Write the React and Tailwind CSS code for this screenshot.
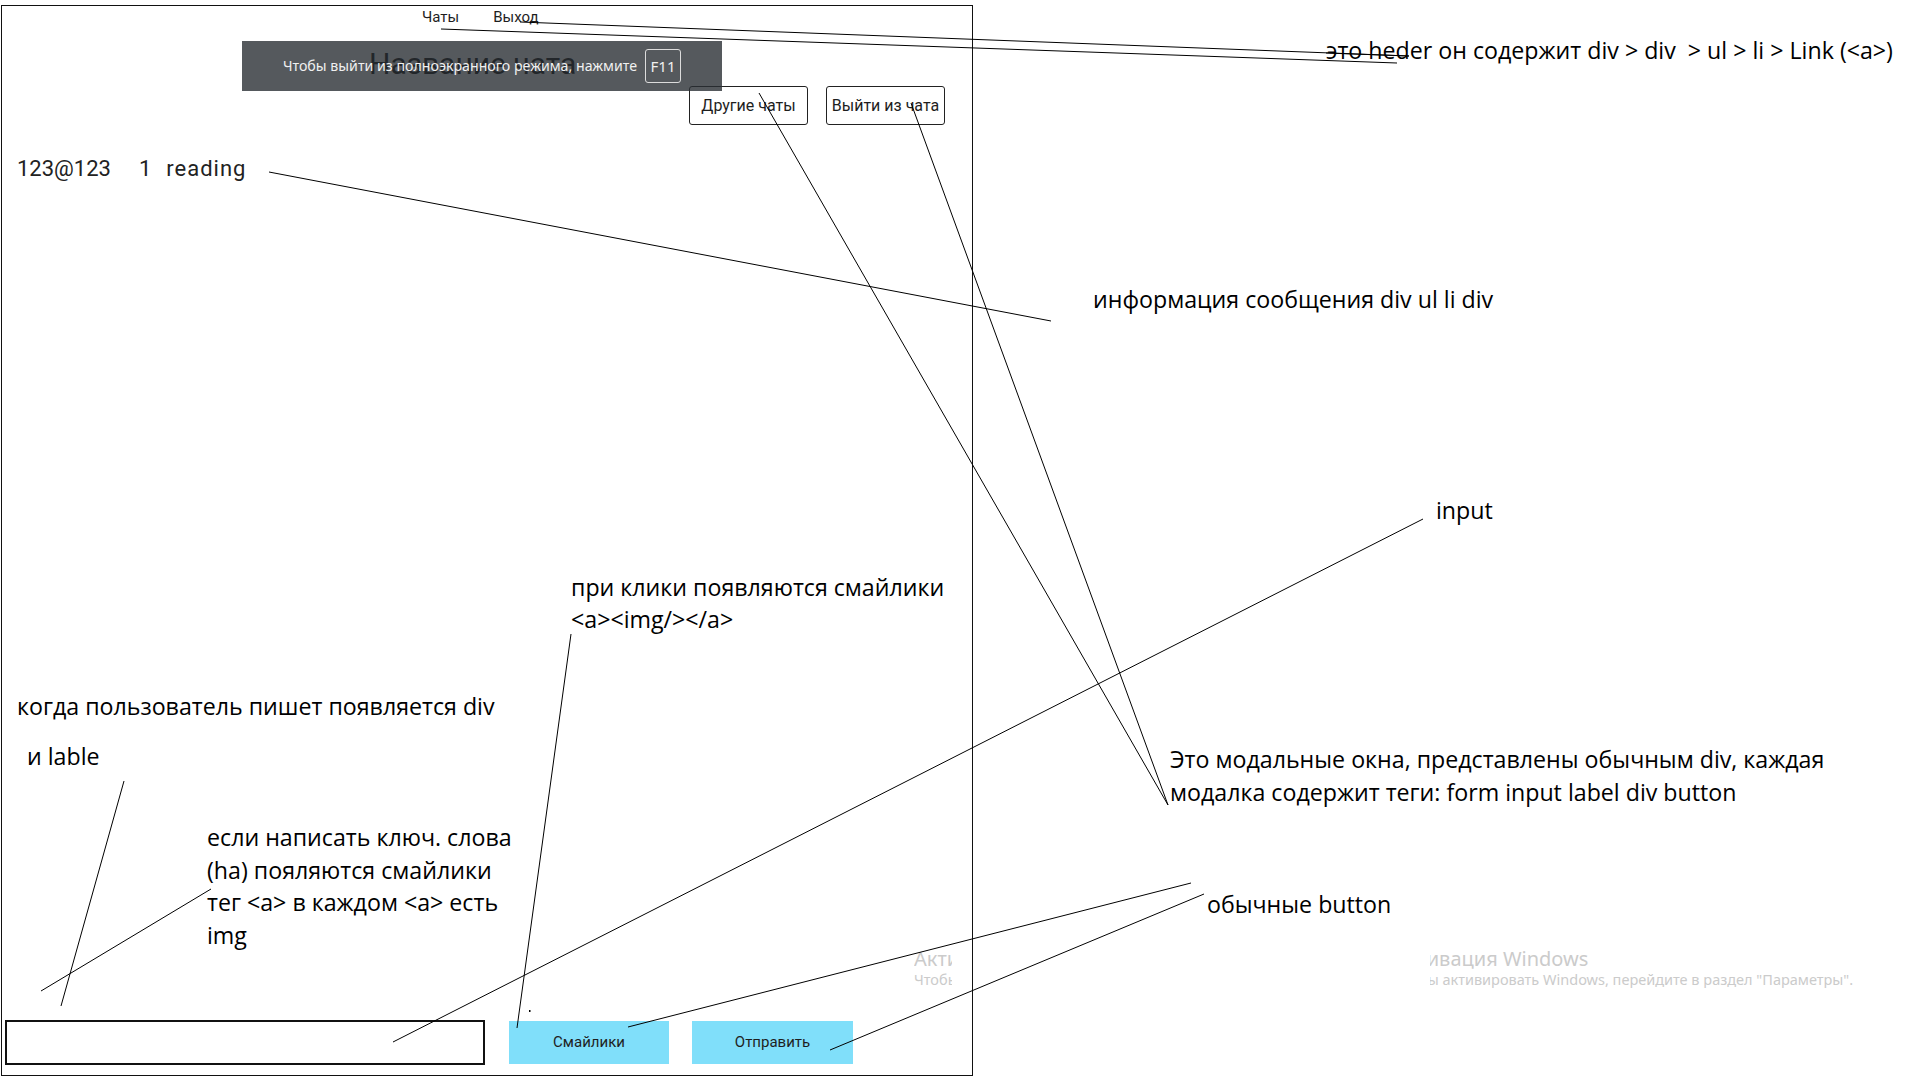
export default function App() {
  const lines = [
    [441, 29, 1397, 63],
    [520, 22, 1409, 56],
    [269, 172, 1051, 321],
    [759, 93, 1168, 805],
    [911, 103, 1168, 805],
    [1423, 519, 393, 1042],
    [571, 634, 517, 1028],
    [1191, 883, 628, 1027],
    [1204, 894, 830, 1050],
    [124, 781, 61, 1006],
    [211, 889, 41, 991],
  ];
  return (
    <div className="relative w-[1920px] h-[1080px] bg-white overflow-hidden">
      <div className="pt-[5px] pl-[1px]">
        <div className="w-[972px] h-[1071px] border border-[#111] flex flex-col font-['Roboto',sans-serif] text-[#1e1e1e]">
          <ul className="flex pl-[420px] gap-[34px] text-[15px] leading-[18px] mt-[2px]">
            <li><a>Чаты</a></li>
            <li><a>Выход</a></li>
          </ul>
          <div className="pl-[367px] mt-[20px] text-[30px] leading-[36px] text-black">Название чата</div>
          <div className="flex justify-end gap-[18px] pr-[27px] mt-[4px]">
            <button className="w-[119px] h-[39px] border border-[#222] rounded-[3px] bg-white text-[16px] text-[#1e1e1e]">Другие чаты</button>
            <button className="w-[119px] h-[39px] border border-[#222] rounded-[3px] bg-white text-[16px] text-[#1e1e1e]">Выйти из чата</button>
          </div>
          <ul className="mt-[31px] pl-[15px] text-[22px] leading-[26px] text-[#222]">
            <li className="flex">
              <div>123@123</div>
              <div className="ml-[28px]">1</div>
              <div className="ml-[15px] tracking-[1px]">reading</div>
            </li>
          </ul>
          <div className="mt-auto mb-[10px] pl-[3px] flex items-start">
            <input className="w-[480px] h-[45px] border-2 border-[#111] outline-none" />
            <button className="ml-[24px] mt-[1px] w-[160px] h-[43px] bg-[#80dffa] text-[15px] text-[#1e1e1e]">Смайлики</button>
            <button className="ml-[23px] mt-[1px] w-[161px] h-[43px] bg-[#80dffa] text-[15px] text-[#1e1e1e]">Отправить</button>
          </div>
        </div>
      </div>

      {/* fullscreen toast */}
      <div className="absolute left-[242px] top-[41px] w-[480px] h-[50px] bg-[rgba(43,47,52,0.8)] flex items-center justify-center gap-[8px] font-['Noto_Sans',sans-serif] text-[#f0f0f0]">
        <span className="text-[14.2px]">Чтобы выйти из полноэкранного режима, нажмите</span>
        <span className="w-[36px] h-[34px] border border-[#dcdcdc] rounded-[3px] flex items-center justify-center text-[15px]">F11</span>
      </div>

      {/* windows watermark pieces */}
      <div className="absolute left-[914px] top-[948px] w-[38px] overflow-hidden font-['Noto_Sans',sans-serif] text-[#cbcbcb] whitespace-nowrap">
        <div className="text-[20px] leading-[22px]">Активация Windows</div>
        <div className="text-[14.5px] leading-[18px]">Чтобы активировать Windows, перейдите в раздел "Параметры".</div>
      </div>
      <div className="absolute left-[1430px] top-[948px] w-[480px] overflow-hidden font-['Noto_Sans',sans-serif] text-[#cbcbcb] whitespace-nowrap">
        <div className="ml-[-36px]">
          <div className="text-[20px] leading-[22px]">Активация Windows</div>
          <div className="text-[14.5px] leading-[18px]">Чтобы активировать Windows, перейдите в раздел "Параметры".</div>
        </div>
      </div>

      {/* annotations */}
      <div className="font-['Open_Sans',sans-serif] text-[23.2px] leading-[33px] text-black">
        <div className="absolute left-[1326px] top-[34px] whitespace-pre">это heder он содержит div &gt; div  &gt; ul &gt; li &gt; Link (&lt;a&gt;)</div>
        <div className="absolute left-[1093px] top-[283px] whitespace-nowrap">информация сообщения div ul li div</div>
        <div className="absolute left-[1436px] top-[494px]">input</div>
        <div className="absolute left-[1170px] top-[743px] whitespace-nowrap">
          <div>Это модальные окна, представлены обычным div, каждая</div>
          <div>модалка содержит теги: form input label div button</div>
        </div>
        <div className="absolute left-[1207px] top-[888px] whitespace-nowrap">обычные button</div>
        <div className="absolute left-[571px] top-[571px] leading-[32px] whitespace-nowrap">
          <div>при клики появляются смайлики</div>
          <div>&lt;a&gt;&lt;img/&gt;&lt;/a&gt;</div>
        </div>
        <div className="absolute left-[17px] top-[690px] whitespace-nowrap">когда пользователь пишет появляется div</div>
        <div className="absolute left-[27px] top-[740px] whitespace-nowrap">и lable</div>
        <div className="absolute left-[207px] top-[821px] leading-[32.5px] whitespace-nowrap">
          <div>если написать ключ. слова</div>
          <div>(ha) пояляются смайлики</div>
          <div>тег &lt;a&gt; в каждом &lt;a&gt; есть</div>
          <div>img</div>
        </div>
      </div>

      <svg className="absolute left-0 top-0 pointer-events-none" width="1920" height="1080">
        {lines.map(([x1, y1, x2, y2], i) => (
          <line key={i} x1={x1} y1={y1} x2={x2} y2={y2} stroke="#000" strokeWidth="1" />
        ))}
        <line x1="1326" y1="53" x2="1409" y2="56" stroke="#000" strokeWidth="1" />
        <rect x="529" y="1010" width="1.5" height="2" fill="#000" />
      </svg>
    </div>
  );
}
